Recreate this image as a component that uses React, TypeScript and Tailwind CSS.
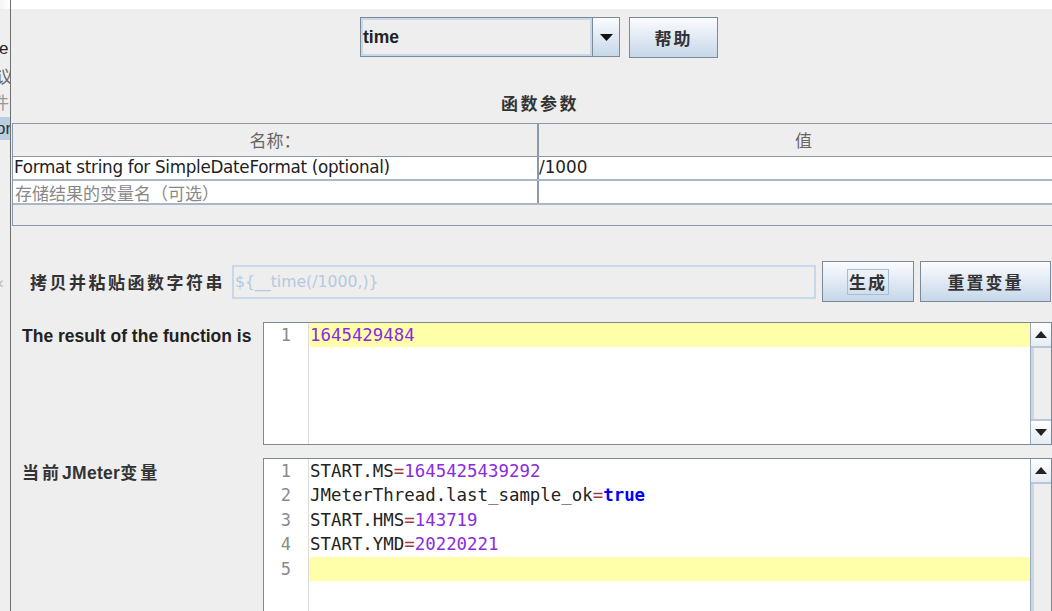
import React from "react";

const cjk = "font-['Noto_Sans_CJK_SC','Liberation_Sans',sans-serif]";
const sans = "font-['Liberation_Sans','Noto_Sans_CJK_SC',sans-serif]";
const dialog = "font-['DejaVu_Sans','Noto_Sans_CJK_SC',sans-serif]";
const mono = "font-['DejaVu_Sans_Mono',monospace]";

function SwingButton({ children, className = "", focus = false }: { children: React.ReactNode; className?: string; focus?: boolean }) {
  return (
    <div
      className={`flex items-center justify-center border border-[#7a8a99] bg-gradient-to-b from-[#fbfcfe] to-[#c6d7e9] text-[#333] ${cjk} text-[17px] font-semibold tracking-[2px] ${className}`}
    >
      {focus ? <span className="border border-[#a8bdd3] px-[1px] leading-[24px]">{children}</span> : children}
    </div>
  );
}

function ScrollBar({ down = false }: { down?: boolean }) {
  return (
    <div className="flex w-[21px] shrink-0 flex-col border-l border-[#9aaabb] bg-[#eeeeee]">
      <div className="flex h-[25px] items-center justify-center border-b-2 border-[#b8c8d8] bg-gradient-to-b from-white to-[#e4ecf4]">
        <svg width="12" height="7" viewBox="0 0 12 7"><path d="M0 7 L6 0 L12 7 Z" fill="#222" /></svg>
      </div>
      <div className="flex-1 border-l-[3px] border-[#c9d8e7]" />
      {down && (
        <div className="flex h-[25px] items-center justify-center border-t-2 border-[#b8c8d8] bg-gradient-to-b from-white to-[#e4ecf4]">
          <svg width="12" height="7" viewBox="0 0 12 7"><path d="M0 0 L6 7 L12 0 Z" fill="#222" /></svg>
        </div>
      )}
    </div>
  );
}

type Tok = { t: string; c: string; b?: boolean };

function CodeArea({ lines, highlight, height, down }: { lines: Tok[][]; highlight: number; height: string; down?: boolean }) {
  return (
    <div className={`flex ${height} flex-1 border border-[#7a8a99] bg-white`}>
      <div className={`w-[45px] shrink-0 border-r border-[#dcdcdc] ${mono} text-[17px] leading-[24.4px] text-[#8a8a8a]`}>
        {lines.map((_, i) => (
          <div key={i} className="pr-[17px] text-right">{i + 1}</div>
        ))}
      </div>
      <div className={`flex-1 ${mono} text-[17.4px] leading-[24.4px] text-[#222]`}>
        {lines.map((l, i) => (
          <div key={i} className={`h-[24.4px] whitespace-pre pl-[1px] ${i === highlight ? "bg-[#ffffaa]" : ""}`}>
            {l.map((tk, j) => (
              <span key={j} className={tk.b ? "font-bold" : ""} style={{ color: tk.c }}>{tk.t}</span>
            ))}
          </div>
        ))}
      </div>
      <ScrollBar down={down} />
    </div>
  );
}

const ID = "#222222";
const EQ = "#a33a3a";
const NUM = "#8a2be2";

export default function App() {
  const vars: Tok[][] = [
    [{ t: "START.MS", c: ID }, { t: "=", c: EQ }, { t: "1645425439292", c: NUM }],
    [{ t: "JMeterThread.last_sample_ok", c: ID }, { t: "=", c: EQ }, { t: "true", c: "#0000ff", b: true }],
    [{ t: "START.HMS", c: ID }, { t: "=", c: EQ }, { t: "143719", c: NUM }],
    [{ t: "START.YMD", c: ID }, { t: "=", c: EQ }, { t: "20220221", c: NUM }],
    [],
  ];

  return (
    <div className="flex h-[611px] w-[1052px] overflow-hidden bg-[#eeeeee]">
      {/* Left tree fragment */}
      <div className={`flex w-[11px] shrink-0 flex-col border-r border-[#6f6f6f] bg-[#efefef] ${sans} text-[17px]`}>
        <div className="h-[9px] bg-gradient-to-r from-[#f4f4f4] to-white" />
        <div className="mt-[27px] h-[24px] overflow-hidden whitespace-nowrap text-[#222]">
          <span className="-ml-[1px] inline-block">e</span>
        </div>
        <div className={`mt-[3px] h-[26px] overflow-hidden ${cjk} whitespace-nowrap text-[#666]`}>
          <span className="-ml-[4px] inline-block">议</span>
        </div>
        <div className={`h-[25px] overflow-hidden ${cjk} whitespace-nowrap text-[#999]`}>
          <span className="-ml-[8px] inline-block">件</span>
        </div>
        <div className="mt-[3px] h-[23px] overflow-hidden whitespace-nowrap bg-[#b9cfe4] leading-[23px] text-[#333]">
          <span className="-ml-[4px] inline-block">or</span>
        </div>
        <div className="mt-[130px] h-[24px] overflow-hidden text-[#bbb]">
          <span className="-ml-[2px] inline-block">‹</span>
        </div>
      </div>

      {/* Main panel */}
      <div className="flex min-w-0 flex-1 flex-col">
        <div className="h-[9px] shrink-0 bg-white" />

        {/* Function chooser */}
        <div className="mt-[8px] flex h-[41px] shrink-0 items-stretch pl-[349px]">
          <div className="flex h-[40px] w-[260px] border border-[#7a8a99] bg-[#eeeeee]">
            <div className={`flex flex-1 items-center border-2 border-[#c9d7e6] ${sans} text-[17.5px] font-bold text-[#222]`}>time</div>
            <div className="flex w-[27px] items-center justify-center border-l border-[#7a8a99] bg-gradient-to-b from-[#fbfcfe] to-[#c6d7e9]">
              <svg width="13" height="7" viewBox="0 0 13 7"><path d="M0 0 L6.5 7 L13 0 Z" fill="#111" /></svg>
            </div>
          </div>
          <SwingButton className="ml-[9px] h-[41px] w-[89px]">帮助</SwingButton>
        </div>

        <div className={`mt-[32px] flex h-[24px] shrink-0 justify-center pl-[17px] ${cjk} text-[17px] font-semibold tracking-[2.5px] text-[#333]`}>
          函数参数
        </div>

        {/* Parameters table */}
        <div className="ml-[1px] mt-[9px] w-[1056px] shrink-0 border-l border-[#8a9aab]">
          <div className={`flex h-[34px] border-y border-[#8a9aab] bg-[#eeeeee] ${cjk} text-[17px] text-[#666]`}>
            <div className="flex w-[526px] items-center justify-center border-r-2 border-[#8a9aab]">名称：</div>
            <div className="flex flex-1 items-center justify-center">值</div>
          </div>
          <div className={`flex h-[24px] border-b-2 border-[#a9b7c6] bg-white ${dialog} text-[16.8px] text-[#222]`}>
            <div className="flex w-[526px] items-center border-r-2 border-[#8a9aab] pl-[1px] tracking-[-0.3px]">Format string for SimpleDateFormat (optional)</div>
            <div className="flex flex-1 items-center">/1000</div>
          </div>
          <div className={`flex h-[24px] border-b-2 border-[#a9b7c6] bg-white ${cjk} text-[17px] text-[#888]`}>
            <div className="flex w-[526px] items-center border-r-2 border-[#8a9aab] pl-[2px] leading-none">存储结果的变量名（可选）</div>
            <div className="flex-1" />
          </div>
          <div className="h-[21px] border-b border-[#8a9aab] bg-[#eeeeee]" />
        </div>

        {/* Copy & paste row */}
        <div className="mt-[35px] flex h-[41px] shrink-0 items-center">
          <div className={`w-[221px] shrink-0 pl-[19px] ${cjk} text-[17px] font-semibold tracking-[2.5px] text-[#333]`}>拷贝并粘贴函数字符串</div>
          <div className={`flex h-[34px] w-[584px] items-center border-2 border-[#c7d8ea] bg-[#eeeeee] pl-[1px] ${dialog} text-[15.7px] text-[#b6c9de]`}>
            {"${__time(/1000,)}"}
          </div>
          <SwingButton focus className="ml-[6px] h-[41px] w-[92px]">生成</SwingButton>
          <SwingButton className="ml-[6px] h-[41px] w-[131px]">重置变量</SwingButton>
        </div>

        {/* Result */}
        <div className="mt-[20px] flex shrink-0">
          <div className={`w-[252px] shrink-0 pl-[11px] pt-[1px] ${sans} text-[17.5px] font-bold text-[#222]`}>The result of the function is</div>
          <CodeArea height="h-[123px]" highlight={0} down lines={[[{ t: "1645429484", c: NUM }]]} />
        </div>

        {/* Variables */}
        <div className="mt-[13px] flex min-h-0 flex-1">
          <div className={`w-[252px] shrink-0 pl-[11px] pt-[1px] ${cjk} text-[17px] font-semibold tracking-[3px] text-[#333]`}>
            当前<span className={`${sans} text-[17.5px] font-bold tracking-[0.3px]`}>JMeter</span>变量
          </div>
          <CodeArea height="h-[160px]" highlight={4} lines={vars} />
        </div>
      </div>
    </div>
  );
}
